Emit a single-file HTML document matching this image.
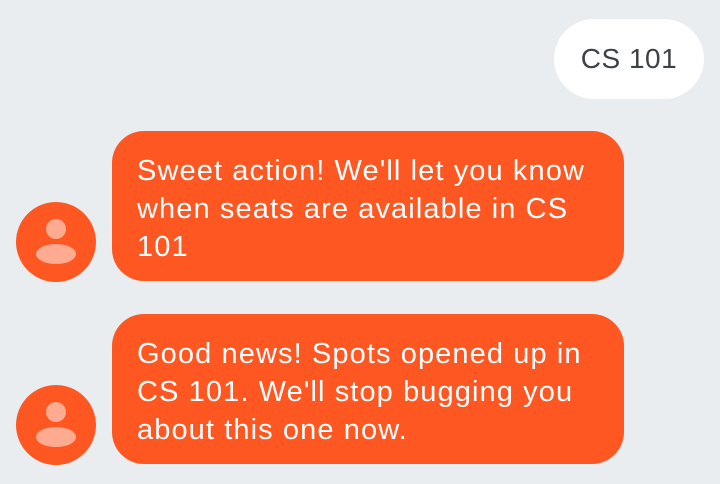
<!DOCTYPE html>
<html><head><style>
body{margin:0;width:720px;height:484px;background:#e9edf0;font-family:"Liberation Sans",sans-serif;position:relative;overflow:hidden}
.b{position:absolute;background:#ff5722;color:#fff;font-size:29px;letter-spacing:1.1px;line-height:38px;border-radius:32px;box-sizing:border-box;padding:21px 10px 0 25px;white-space:nowrap}
.u{position:absolute;left:554px;top:19px;width:150px;height:80px;background:#fff;border-radius:40px;color:#3c4246;font-size:28px;letter-spacing:0.5px;line-height:80px;text-align:center}
.av{position:absolute;left:16px;width:80px;height:80px;border-radius:50%;background:#ff5722}
</style></head><body>
<div class="u">CS 101</div>
<div class="b" style="left:112px;top:131px;width:512px;height:150px">Sweet action! We'll let you know<br>when seats are available in CS<br>101</div>
<div class="b" style="left:112px;top:314px;width:512px;height:150px">Good news! Spots opened up in<br>CS 101. We'll stop bugging you<br>about this one now.</div>
<svg class="av" style="top:202px" viewBox="0 0 80 80"><circle cx="40" cy="27" r="10" fill="#ffab91"/><ellipse cx="40" cy="52" rx="20" ry="10" fill="#ffab91"/></svg>
<svg class="av" style="top:385px" viewBox="0 0 80 80"><circle cx="40" cy="27" r="10" fill="#ffab91"/><ellipse cx="40" cy="52" rx="20" ry="10" fill="#ffab91"/></svg>
</body></html>
